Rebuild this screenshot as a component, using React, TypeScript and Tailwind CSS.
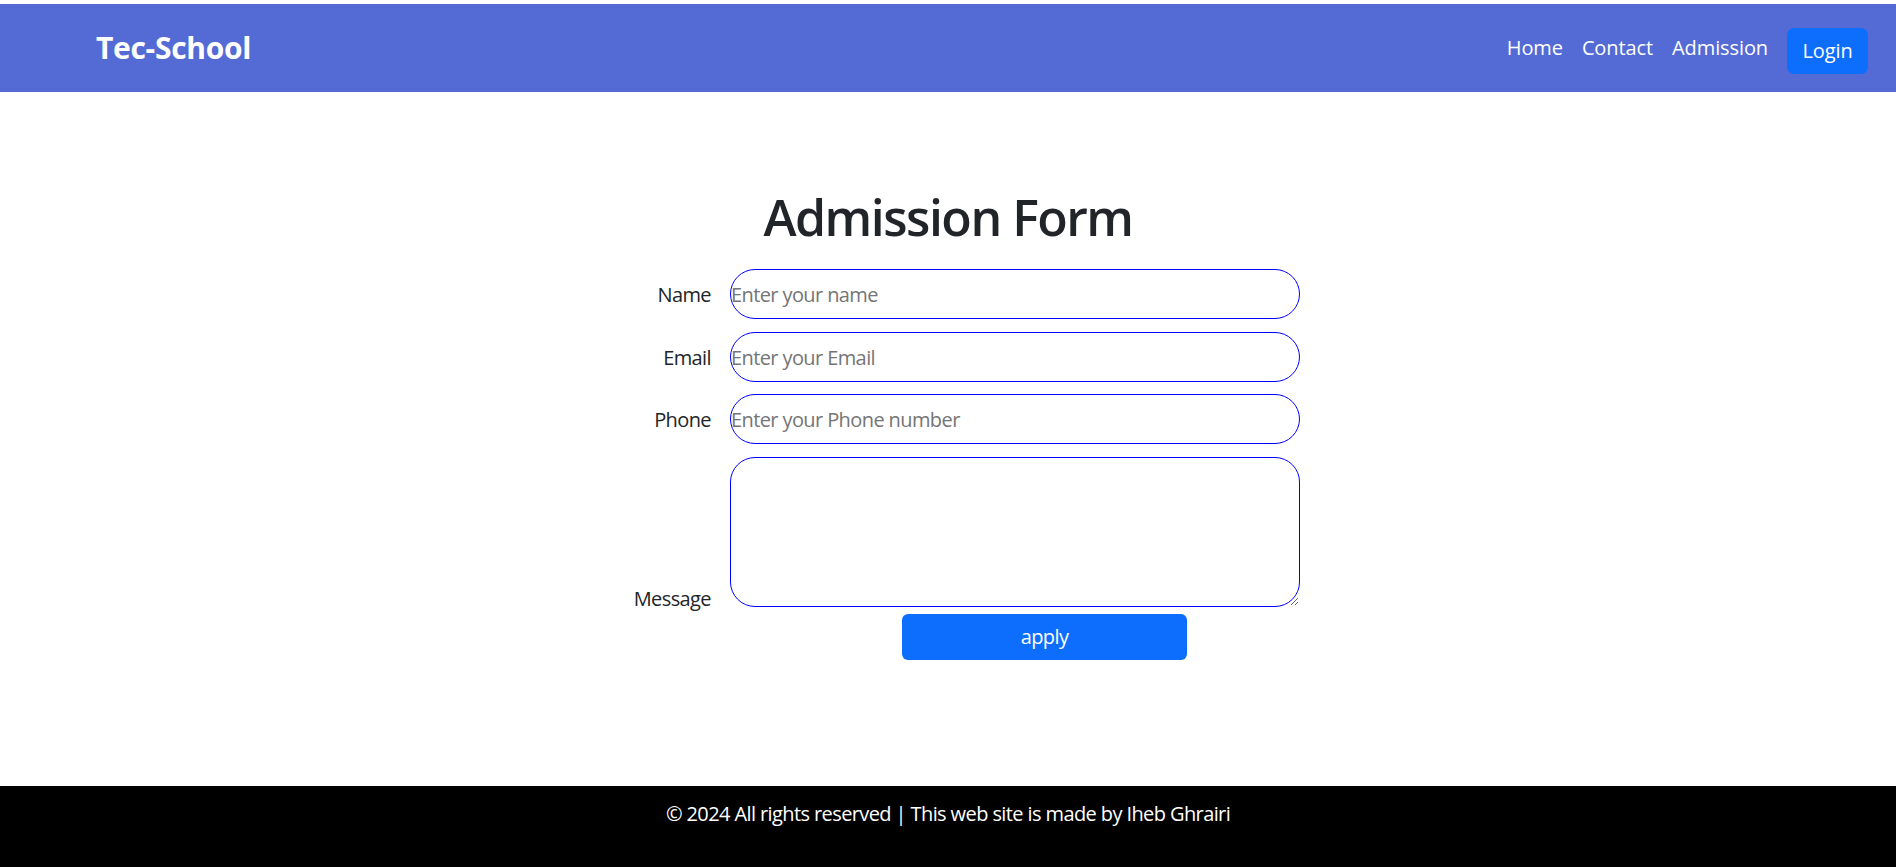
import React from "react";

const font = { fontFamily: '"Open Sans", "Noto Sans", sans-serif' };

export default function App() {
  return (
    <div className="min-h-screen flex flex-col bg-white pt-[4px] font-['Open_Sans','Noto_Sans',sans-serif]" style={font}>
      <nav className="h-[88px] bg-[#546bd5] flex items-center justify-between pl-[96px] pr-[28px]">
        <a className="text-white font-bold text-[30px] leading-none tracking-[-0.01em]">Tec-School</a>
        <div className="flex items-center gap-[19px]">
          <a className="text-white text-[20px] tracking-[-0.005em]">Home</a>
          <a className="text-white text-[20px] tracking-[-0.005em]">Contact</a>
          <a className="text-white text-[20px] tracking-[-0.005em]">Admission</a>
          <button className="mt-[6px] h-[46px] w-[81px] rounded-[7px] bg-[#0d6efd] text-white text-[20px] tracking-[-0.005em]">
            Login
          </button>
        </div>
      </nav>

      <main className="flex-1 pt-[95px]">
        <h1 className="text-center text-[50px] leading-[60px] font-semibold text-[#212529] tracking-[-0.03em]">
          Admission Form
        </h1>
        <form className="mx-auto w-[704px] mt-[22px] text-[20px] text-[#212529] tracking-[-0.03em]">
          <div className="flex items-baseline">
            <label className="w-[134px] pr-[19px] text-right">Name</label>
            <input
              type="text"
              placeholder="Enter your name"
              className="w-[570px] h-[50px] border border-[#0000ff] rounded-[25px] p-0 outline-none placeholder:text-[#757575] tracking-[-0.03em]"
            />
          </div>
          <div className="flex items-baseline mt-[13px]">
            <label className="w-[134px] pr-[19px] text-right">Email</label>
            <input
              type="email"
              placeholder="Enter your Email"
              className="w-[570px] h-[50px] border border-[#0000ff] rounded-[25px] p-0 outline-none placeholder:text-[#757575] tracking-[-0.03em]"
            />
          </div>
          <div className="flex items-baseline mt-[12px]">
            <label className="w-[134px] pr-[19px] text-right">Phone</label>
            <input
              type="tel"
              placeholder="Enter your Phone number"
              className="w-[570px] h-[50px] border border-[#0000ff] rounded-[25px] p-0 outline-none placeholder:text-[#757575] tracking-[-0.03em]"
            />
          </div>
          <div className="flex items-end mt-[13px]">
            <label className="w-[134px] pr-[19px] text-right leading-[20px] -mb-[2px]">Message</label>
            <textarea className="w-[570px] h-[150px] border border-[#0000ff] rounded-[25px] outline-none block" />
          </div>
          <div className="flex mt-[7px]">
            <button
              type="button"
              className="ml-[306px] w-[285px] h-[46px] rounded-[6px] bg-[#0d6efd] text-white text-[20px] tracking-[-0.03em]"
            >
              apply
            </button>
          </div>
        </form>
      </main>

      <footer className="h-[81px] bg-black pt-[13px] text-center">
        <p className="text-white text-[20px] leading-[30px] tracking-[-0.03em]">
          © 2024 All rights reserved | This web site is made by Iheb Ghrairi
        </p>
      </footer>
    </div>
  );
}
